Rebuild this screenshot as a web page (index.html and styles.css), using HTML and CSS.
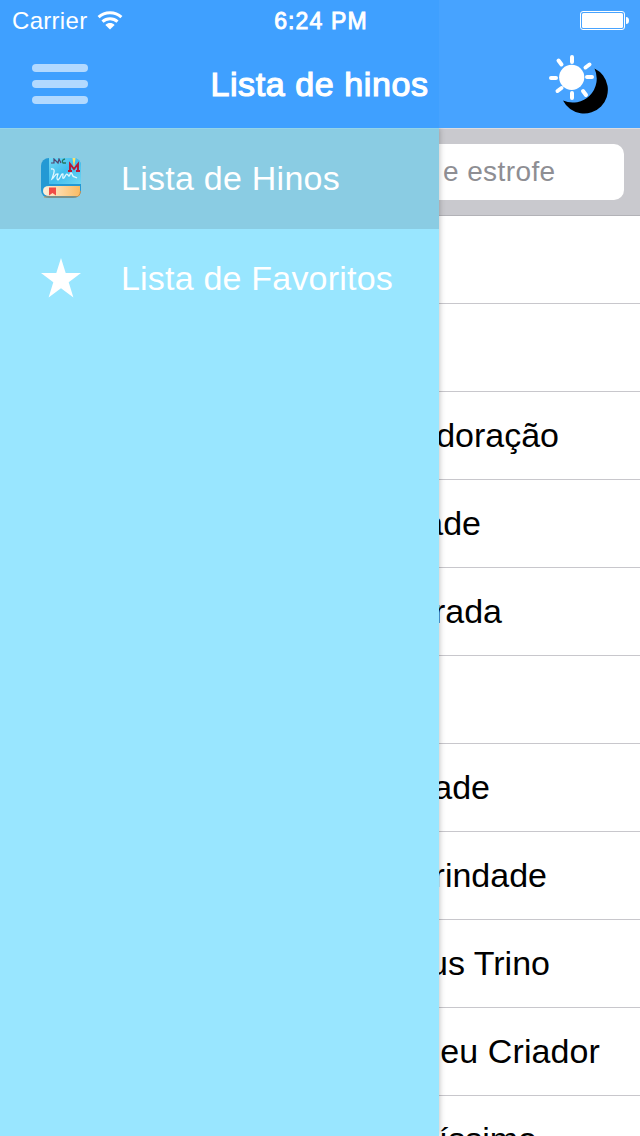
FILE: index.html
```html
<!DOCTYPE html>
<html lang="pt">
<head>
<meta charset="utf-8">
<title>Lista de hinos</title>
<link rel="stylesheet" href="styles.css">
</head>
<body>
<div class="screen">
  <header class="header">
    <div class="status">
      <div class="carrier"><span class="carrier-name">Carrier</span>
        <svg class="wifi" width="26" height="20" viewBox="0 0 26 20"><g fill="none" stroke="#fff" stroke-width="3"><path d="M1.600 7.200C7.800 1.300 18.200 1.300 24.400 7.200"/><path d="M5.500 11.600c4.200-3.900 10.800-3.900 15 0"/></g><path d="M8.400 15c2.600-2.600 6.600-2.600 9.200 0L13 19.500z" fill="#fff"/></svg>
      </div>
      <div class="time">6:24 PM</div>
      <svg class="battery" width="50" height="20" viewBox="0 0 50 20"><rect x=".5" y=".5" width="44" height="18" rx="2.5" fill="none" stroke="#fff"/><rect x="2" y="2" width="41" height="15" rx="1.5" fill="#fff"/><path d="M46 6q3 0 3 3.5T46 13z" fill="#fff"/></svg>
    </div>
    <div class="nav">
      <div class="menu"><i></i><i></i><i></i></div>
      <h1 class="title">Lista de hinos</h1>
      <svg class="mode" width="60" height="60" viewBox="0 0 60 60"><path d="M46.500 14.500A23.700 23.700 0 1 1 15 46.500A24 24 0 0 0 46.500 14.500z" fill="#000"/><circle cx="23.700" cy="23.300" r="12.600" fill="#fff"/><g stroke="#fff" stroke-width="4" stroke-linecap="round"><path d="M24 3v5M24 39v5M3 24h5M39 23h5M10.500 6.500l3 4M37.500 13.500l4-3M9.500 37l4-3M35 37l3 4"/></g></svg>
    </div>
  </header>
  <div class="body">
    <nav class="drawer">
      <div class="entry selected">
        <svg class="entry-icon" width="40" height="40" viewBox="0 0 40 40"><defs><linearGradient id="cover" x2="1" y2="1"><stop stop-color="#75d9f4"/><stop offset=".5" stop-color="#40bdee"/><stop offset="1" stop-color="#70d6f2"/></linearGradient><linearGradient id="pages" x2="1"><stop stop-color="#fff0dc"/><stop offset="1" stop-color="#f9bb62"/></linearGradient></defs><rect width="40" height="40" rx="8" fill="#2499d4"/><path d="M8 0h24q8 0 8 8v18H8z" fill="url(#cover)"/><path d="M8 28h31v10H9q-7 0-7-5t6-5z" fill="url(#pages)"/><path d="M3 39h31q5 0 5.500-6" fill="none" stroke="#c98c48"/><path d="M8 29.500h7v8l-3.500-2.500L8 37.500z" fill="#f04c46"/><path d="M10 11c5-1 3 4 1 10 3-2 3-6 6-5-1 3-2 5 0 6 3-2 3-7 5-6 0 3-1 5 1 4 2-3 2-5 4-3 2 4 2-5 4-1 1 4 2 2 5 4" fill="none" stroke="#e0f7ff" stroke-width="1.300"/><path d="M10 5h3V1l4 4 1-4 2 4" fill="none" stroke="#53456f" stroke-width="1.200"/><path d="M24 1q-4 1-2 4h3" fill="none" stroke="#257a61" stroke-width="1.300"/><path d="M29 13V6l4 5 4-5v7M27 13h4M35 13h4" fill="none" stroke="#b71936" stroke-width="1.900"/><path d="M31.500 0h3L33 10z" fill="#ffe36a"/></svg>
        <span>Lista de Hinos</span>
      </div>
      <div class="entry favorites">
        <svg class="entry-icon" width="40" height="40" viewBox="0 0 40 40"><path d="M20 0l4.700 15H40L27.700 24.300 32.400 39.500 20 30.200 7.600 39.500l4.700-15.200L0 15h15.300z" fill="#fff"/></svg>
        <span>Lista de Favoritos</span>
      </div>
    </nav>
    <main class="content">
      <div class="search"><div class="field">e estrofe</div></div>
      <ul class="list">
        <li class="row"></li>
        <li class="row"></li>
        <li class="row adoracao">doração</li>
        <li class="row dade">ade</li>
        <li class="row rada">rada</li>
        <li class="row"></li>
        <li class="row ade">ade</li>
        <li class="row trindade">rindade</li>
        <li class="row trino">us Trino</li>
        <li class="row criador">eu Criador</li>
        <li class="row issimo">íssimo</li>
      </ul>
    </main>
  </div>
</div>
</body>
</html>
```
FILE: styles.css
```css
* { box-sizing: border-box; }
body { margin: 0; font-family: "Liberation Sans", Arial, sans-serif; }
.screen { width: 640px; height: 1136px; overflow: hidden; display: flex; flex-direction: column; background: #fff; }
.header { flex: none; height: 128px; color: #fff; background: linear-gradient(90deg, #3fa0ff 439px, #47a3ff 439px); }
.status { height: 40px; display: grid; grid-template-columns: 1fr auto 1fr; align-items: center; padding: 2px 10px 0 12px; }
.carrier { display: flex; align-items: center; gap: 10px; font-size: 24px; line-height: 38px; }
.carrier-name { letter-spacing: .3px; }
.wifi { margin-top: -3px; }
.time { font-size: 23px; font-weight: normal; letter-spacing: 1.15px; line-height: 38px; -webkit-text-stroke: .9px #fff; }
.battery { justify-self: end; }
.nav { height: 88px; display: grid; grid-template-columns: 1fr auto 1fr; align-items: center; padding: 0 32px; }
.menu { display: flex; flex-direction: column; gap: 8px; }
.menu i { width: 56px; height: 8px; border-radius: 4px; background: #b2d9ff; }
.title { margin: 0 1px 0 0; font-size: 34px; line-height: 40px; font-weight: normal; letter-spacing: .6px; -webkit-text-stroke: 1.2px #fff; }
.mode { justify-self: end; }
.body { flex: 1; min-height: 0; display: grid; grid-template-columns: 439px 201px; }
.drawer { z-index: 1; background: #99e6ff; box-shadow: 0 0 6px rgba(0, 0, 0, .3); clip-path: inset(0 -12px 0 0); }
.entry { height: 100px; display: flex; align-items: center; gap: 40px; padding: 0 0 2px 41px; color: #fff; font-size: 34px; letter-spacing: .25px; }
.selected { height: 101px; background: #8acce3; border-top: 1px solid #93d4ea; }
.favorites { letter-spacing: .2px; }
.entry-icon { flex: none; }
.content { overflow: hidden; border-top: 1px solid #dddde0; }
.search { height: 87px; padding: 15px 16px 15px 0; background: #c9c9ce; border-bottom: 1px solid #b2b2b7; }
.field { height: 56px; border-radius: 0 10px 10px 0; background: #fff; color: #8e8e93; font-size: 28px; line-height: 56px; padding-left: 4px; letter-spacing: .4px; }
.list { margin: 0; padding: 0; list-style: none; }
.row { height: 88px; display: flex; align-items: center; justify-content: flex-end; border-bottom: 1px solid #c8c7cc; color: #000; font-size: 34px; white-space: nowrap; }
.adoracao { padding-right: 81px; }
.dade { padding-right: 159px; }
.rada { padding-right: 138px; }
.ade { padding-right: 150px; }
.trindade { padding-right: 93px; }
.trino { padding-right: 90px; }
.criador { padding-right: 40px; letter-spacing: .1px; }
.issimo { padding-right: 103px; }
```
